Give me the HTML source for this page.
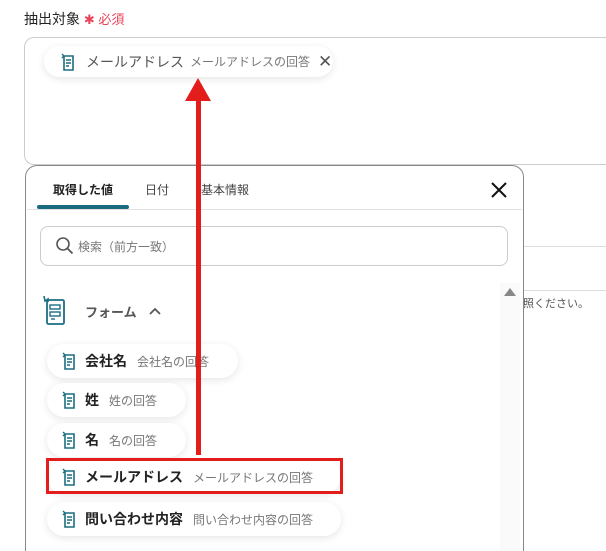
<!DOCTYPE html>
<html><head><meta charset="utf-8"><style>
*{box-sizing:border-box;margin:0;padding:0}
html,body{width:606px;height:551px;overflow:hidden}
body{background:#fff;position:relative;font-family:"Liberation Sans","Noto Sans CJK JP",sans-serif;color:#333}
.abs{position:absolute}
.pill{position:absolute;left:47px;height:34px;border-radius:17px;background:#fff;box-shadow:0 2px 8px rgba(0,0,0,.10);display:flex;align-items:center;padding-left:14px;white-space:nowrap}
.pill b{font-size:14px;color:#222;margin-left:8px;font-weight:bold}
.pill span{font-size:12px;color:#777;margin-left:10px}
</style></head><body>
<div class="abs" style="left:24px;top:9px;font-size:14px;color:#222">抽出対象 <span style="color:#e8445a;font-size:13px">✱ 必須</span></div>
<div class="abs" style="left:24px;top:37px;width:582px;height:128px;border:1px solid #ccc;border-right:none;border-radius:10px 0 0 10px"></div>
<div class="abs" style="left:44px;top:46px;width:289px;height:31px;border-radius:16px;background:#fff;box-shadow:0 2px 8px rgba(0,0,0,.10);display:flex;align-items:center;padding-left:16px;white-space:nowrap">
<svg width="16" height="18" viewBox="0 0 16 18"><path d="M4 3h9v14H4z M6 7h5 M6 10h5 M6 13h3" fill="none" stroke="#1d6e82" stroke-width="1.6"/><path d="M2 1l2 2-2 2" fill="none" stroke="#1d6e82" stroke-width="1.4"/></svg>
<span style="font-size:14px;color:#555;margin-left:10px">メールアドレス</span>
<span style="font-size:12px;color:#777;margin-left:6px">メールアドレスの回答</span>
<span style="font-size:17px;color:#555;margin-left:8px">✕</span></div>
<div class="abs" style="left:523px;top:246px;width:83px;border-top:1px solid #ddd"></div>
<div class="abs" style="left:523px;top:290px;width:83px;border-top:1px solid #ddd"></div>
<div class="abs" style="left:523px;top:295px;font-size:11px;color:#555">照ください。</div>
<div class="abs" style="left:25px;top:165px;width:499px;height:386px;border:1px solid #888;border-bottom:none;border-radius:12px 12px 0 0;background:#fff"></div>
<div class="abs" style="left:53px;top:181px;font-size:12px;color:#222;font-weight:bold">取得した値</div>
<div class="abs" style="left:145px;top:181px;font-size:12px;color:#444">日付</div>
<div class="abs" style="left:201px;top:181px;font-size:12px;color:#444">基本情報</div>
<div class="abs" style="left:37px;top:205px;width:92px;height:4px;background:#1a6a80;border-radius:2px"></div>
<div class="abs" style="left:27px;top:209px;width:495px;border-top:1px solid #e2e2e2"></div>
<svg class="abs" style="left:491px;top:182px" width="16" height="16" viewBox="0 0 16 16"><path d="M1 1l14 14M15 1L1 15" stroke="#111" stroke-width="2"/></svg>
<div class="abs" style="left:40px;top:226px;width:468px;height:40px;border:1px solid #ccc;border-radius:8px"></div>
<svg class="abs" style="left:55px;top:236px" width="20" height="20" viewBox="0 0 20 20"><circle cx="8" cy="8" r="6" fill="none" stroke="#555" stroke-width="1.6"/><path d="M12.5 12.5l5 5" stroke="#555" stroke-width="1.8"/></svg>
<div class="abs" style="left:78px;top:238px;font-size:12px;color:#777">検索（前方一致）</div>
<svg class="abs" style="left:41px;top:295px" width="26" height="32" viewBox="0 0 26 32"><rect x="6" y="5" width="17" height="24" rx="1.5" fill="none" stroke="#1d6e82" stroke-width="1.8"/><rect x="9" y="10" width="10" height="4" fill="none" stroke="#1d6e82" stroke-width="1.4"/><rect x="9" y="17" width="10" height="4" fill="none" stroke="#1d6e82" stroke-width="1.4"/><path d="M10 24h4" stroke="#1d6e82" stroke-width="1.4"/><path d="M3 1l1 5 3-2v3" fill="none" stroke="#1d6e82" stroke-width="1.6"/></svg>
<div class="abs" style="left:85px;top:302px;font-size:13px;color:#555;font-weight:bold">フォーム</div>
<svg class="abs" style="left:149px;top:307px" width="12" height="8" viewBox="0 0 12 8"><path d="M1 7l5-5 5 5" fill="none" stroke="#555" stroke-width="1.8"/></svg>
<div class="abs" style="left:500px;top:283px;width:20px;height:268px;background:#fafafa"></div>
<div class="abs" style="left:504px;top:288px;width:0;height:0;border-left:6px solid transparent;border-right:6px solid transparent;border-bottom:8px solid #888"></div>
<svg width="0" height="0" style="position:absolute"><defs><symbol id="ic" viewBox="0 0 16 18"><path d="M4 3h9v14H4z M6 7h5 M6 10h5 M6 13h3" fill="none" stroke="#1d6e82" stroke-width="1.6"/><path d="M2 1l2 2-2 2" fill="none" stroke="#1d6e82" stroke-width="1.4"/></symbol></defs></svg>
<div class="pill" style="top:344px;width:191px"><svg width="16" height="18"><use href="#ic"/></svg><b>会社名</b><span>会社名の回答</span></div>
<div class="pill" style="top:383px;width:139px"><svg width="16" height="18"><use href="#ic"/></svg><b>姓</b><span>姓の回答</span></div>
<div class="pill" style="top:423px;width:139px"><svg width="16" height="18"><use href="#ic"/></svg><b>名</b><span>名の回答</span></div>
<div class="pill" style="top:461px;width:294px;height:32px"><svg width="16" height="18"><use href="#ic"/></svg><b>メールアドレス</b><span>メールアドレスの回答</span></div>
<div class="abs" style="left:46px;top:458px;width:297px;height:36px;border:3px solid #e31c1c"></div>
<div class="pill" style="top:502px;width:294px"><svg width="16" height="18"><use href="#ic"/></svg><b>問い合わせ内容</b><span>問い合わせ内容の回答</span></div>
<div class="abs" style="left:196px;top:98px;width:5px;height:357px;background:#e31c1c"></div>
<div class="abs" style="left:185px;top:78px;width:0;height:0;border-left:13px solid transparent;border-right:13px solid transparent;border-bottom:23px solid #e31c1c"></div>
</body></html>
